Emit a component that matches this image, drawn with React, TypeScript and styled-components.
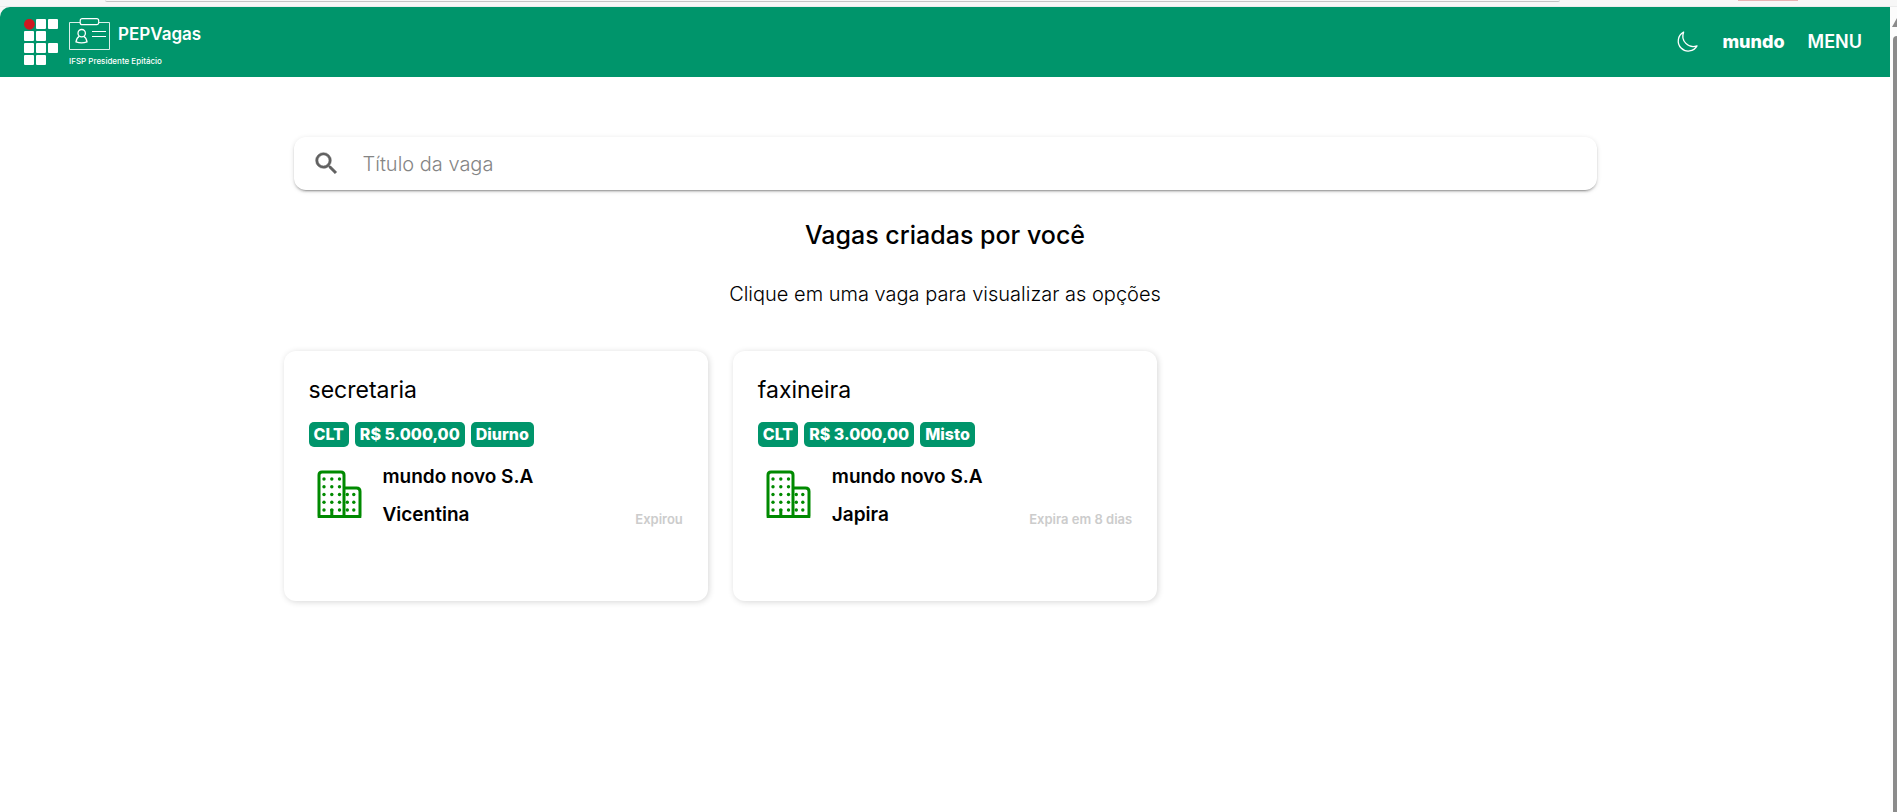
import React from "react";
import styled, { createGlobalStyle } from "styled-components";

const GlobalStyle = createGlobalStyle`
  *, *::before, *::after { box-sizing: border-box; }
  body { margin: 0; background: #ffffff; color: #000000; font-family: Inter, sans-serif; }
  h1, h2, p, ul { margin: 0; padding: 0; }
`;

const green = "#00956b";

const Shell = styled.div`
  min-height: 100vh;
  display: flex;
  flex-direction: column;
`;

const ChromeStrip = styled.div`
  height: 7px;
  padding: 0 99px 0 105px;
  background: #f7f7f7;
  border-bottom: 1px solid #ececec;
  display: flex;
  align-items: flex-start;
`;

const AddressBar = styled.div`
  flex: 1;
  height: 2px;
  border-bottom: 1px solid #c4c4c4;
  border-radius: 0 0 12px 12px;
`;

const Alert = styled.div`
  width: 60px;
  height: 1px;
  margin-left: 178px;
  background: #e8b4b4;
`;

const Viewport = styled.div`
  flex: 1;
  display: flex;
  background: linear-gradient(#f7f7f7 0 12px, #ffffff 12px);
`;

const Page = styled.div`
  flex: 1;
  min-width: 0;
`;

const ScrollTrack = styled.div`
  width: 7px;
  background: #fcfcfc;
  padding-top: 11px;
  overflow: hidden;
  display: flex;
  flex-direction: column;
`;

const ScrollArrow = styled.svg`
  width: 10px;
  height: 9px;
  margin-left: 2px;
  flex: none;
`;

const ScrollThumb = styled.div`
  flex: 1;
  margin: 9px 0 0 3px;
  background: #8b8b8b;
  border-radius: 4px 0 0 0;
`;

const Header = styled.header`
  height: 70px;
  padding: 0 28px 0 24px;
  background: ${green};
  color: #ffffff;
  border-top-left-radius: 10px;
  display: flex;
  align-items: center;
  justify-content: space-between;
`;

const Brand = styled.a`
  display: flex;
  align-items: center;
  gap: 11px;
  color: inherit;
  text-decoration: none;
`;

const BrandText = styled.span`
  display: flex;
  flex-direction: column;
  gap: 6px;
`;

const BrandTitle = styled.span`
  display: flex;
  align-items: center;
  gap: 8px;
  font-size: 17px;
  line-height: 32px;
  font-weight: 600;
`;

const BrandCaption = styled.span`
  font-size: 8px;
  line-height: 10px;
  font-weight: 500;
`;

const Actions = styled.nav`
  display: flex;
  align-items: center;
  gap: 23px;
`;

const PlainButton = styled.button`
  border: 0;
  padding: 0;
  background: none;
  color: inherit;
  font: inherit;
  display: flex;
  cursor: pointer;
`;

const UserButton = styled(PlainButton)`
  font-size: 18px;
  line-height: 24px;
  font-weight: 800;
`;

const MenuButton = styled(PlainButton)`
  font-size: 18px;
  line-height: 24px;
  font-weight: 600;
`;

const Main = styled.main`
  width: 70%;
  margin: 0 auto;
  padding: 60px 0 40px;
`;

const SearchBox = styled.label`
  height: 53px;
  margin: 0 10px;
  padding: 0 18px;
  border-radius: 12px;
  box-shadow: 0 3px 1px -2px rgba(0, 0, 0, 0.2), 0 2px 2px 0 rgba(0, 0, 0, 0.14), 0 1px 5px 0 rgba(0, 0, 0, 0.12);
  display: flex;
  align-items: center;
  gap: 22px;
`;

const SearchInput = styled.input`
  flex: 1;
  min-width: 0;
  padding: 0;
  border: 0;
  outline: 0;
  background: none;
  font-family: inherit;
  font-size: 20px;
  line-height: 28px;
  font-weight: 300;
  &::placeholder { color: #858585; opacity: 1; }
`;

const Title = styled.h1`
  margin-top: 29px;
  font-size: 25px;
  line-height: 32px;
  font-weight: 500;
  text-align: center;
`;

const Subtitle = styled.p`
  margin-top: 29px;
  font-size: 20px;
  line-height: 28px;
  font-weight: 300;
  text-align: center;
`;

const JobGrid = styled.ul`
  margin-top: 43px;
  display: grid;
  grid-template-columns: repeat(3, 1fr);
  gap: 25px;
  list-style: none;
`;

const JobCard = styled.li`
  min-height: 250px;
  padding: 25px;
  border-radius: 12px;
  box-shadow: 1px 1px 6px rgba(0, 0, 0, 0.16);
`;

const JobTitle = styled.h2`
  font-size: 23px;
  line-height: 28px;
  font-weight: 400;
`;

const Tags = styled.div`
  margin-top: 18px;
  display: flex;
  gap: 6px;
`;

const Tag = styled.span`
  padding: 0 5px;
  border-radius: 5px;
  background: ${green};
  color: #ffffff;
  font-size: 16px;
  line-height: 25px;
  font-weight: 800;
`;

const Company = styled.div`
  margin-top: 18px;
  display: flex;
`;

const CompanyIcon = styled.svg`
  width: 45px;
  height: 48px;
  margin: 5px 21px 0 8px;
  flex: none;
`;

const CompanyText = styled.div`
  flex: 1;
  font-size: 19px;
  line-height: 24px;
  font-weight: 600;
  display: flex;
  flex-direction: column;
  gap: 14px;
`;

const Expiry = styled.span`
  align-self: flex-end;
  color: #cccccc;
  font-size: 13px;
  line-height: 16px;
  font-weight: 600;
`;

const tiles = [[1, 0], [2, 0], [0, 1], [1, 1], [0, 2], [1, 2], [2, 2], [0, 3], [1, 3]];

const CampusLogo = () => (
  <svg width="34" height="46" viewBox="0 0 34 46" aria-hidden="true">
    <circle cx="5.4" cy="5.3" r="5.4" fill="#cf1820" />
    {tiles.map(([c, r]) => (
      <rect key={`${c}-${r}`} x={c * 12} y={r * 12} width="10" height="10" rx="1" fill="#fff" />
    ))}
  </svg>
);

const BadgeIcon = () => (
  <svg width="41" height="32" viewBox="0 0 41 32" fill="none" stroke="#fff" aria-hidden="true">
    <path d="M11 4.5H.5v27h40v-27H30" opacity=".85" />
    <rect x="11.2" y=".7" width="18.5" height="6" rx="2" strokeWidth="1.2" />
    <circle cx="12.7" cy="15.2" r="3.7" strokeWidth="1.3" />
    <path d="M10.2 18.3c-2 1-2.8 3-3.2 5.5 3 1.1 8.200 1.100 11 0-.4-2.500-1.300-4.500-3.200-5.500" strokeWidth="1.3" />
    <path d="M23 13.500h14M23 18.500h14" strokeWidth="1.1" />
  </svg>
);

const MoonIcon = () => (
  <svg width="24" height="24" viewBox="0 0 24 24" fill="none" stroke="#fff" strokeWidth="1.3" strokeLinejoin="round" aria-hidden="true">
    <path d="M8.600 2.200A10 10 0 1 0 22 15.900 10.500 10.500 0 0 1 8.600 2.200Z" />
  </svg>
);

const SearchIcon = () => (
  <svg width="29" height="29" viewBox="0 0 24 24" fill="#616161" stroke="#616161" strokeWidth=".4" aria-hidden="true">
    <path d="M15.500 14h-.79l-.28-.27A6.470 6.470 0 0 0 16 9.500 6.500 6.500 0 1 0 9.500 16c1.610 0 3.090-.59 4.230-1.570l.27.28v.79l5 4.990L20.490 19l-4.990-5zm-6 0C7.010 14 5 11.990 5 9.500S7.010 5 9.500 5 14 7.010 14 9.500 11.990 14 9.500 14z" />
  </svg>
);

const towerDots = [7, 14.800, 22.500].flatMap((x) => [9, 16.700, 24.500, 32.300, 40].map((y) => [x, y]));
const annexDots = [30.300, 36.800].flatMap((x) => [24.500, 32.300, 40].map((y) => [x, y]));

const BuildingIcon = () => (
  <CompanyIcon viewBox="0 0 45 48" aria-hidden="true">
    <path
      d="M2 46.500V5Q2 2 5 2H24Q27 2 27 5V46.500M27 18H39.500Q43 18 43 21.500V46.500M.7 46.500H44.300M14.800 46V39"
      fill="none"
      stroke="#008a00"
      strokeWidth="3"
    />
    {[...towerDots, ...annexDots].map(([x, y]) => (
      <circle key={`${x}-${y}`} cx={x} cy={y} r="1.700" fill="#008a00" />
    ))}
  </CompanyIcon>
);

const jobs = [
  { title: "secretaria", tags: ["CLT", "R$ 5.000,00", "Diurno"], company: "mundo novo S.A", city: "Vicentina", expiry: "Expirou" },
  { title: "faxineira", tags: ["CLT", "R$ 3.000,00", "Misto"], company: "mundo novo S.A", city: "Japira", expiry: "Expira em 8 dias" },
];

export default function App() {
  return (
    <>
      <GlobalStyle />
      <Shell>
        <ChromeStrip>
          <AddressBar />
          <Alert />
        </ChromeStrip>
        <Viewport>
          <Page>
            <Header>
              <Brand href="#">
                <CampusLogo />
                <BrandText>
                  <BrandTitle><BadgeIcon />PEPVagas</BrandTitle>
                  <BrandCaption>IFSP Presidente Epitácio</BrandCaption>
                </BrandText>
              </Brand>
              <Actions>
                <PlainButton type="button" aria-label="Alternar tema"><MoonIcon /></PlainButton>
                <UserButton type="button">mundo</UserButton>
                <MenuButton type="button">MENU</MenuButton>
              </Actions>
            </Header>
            <Main>
              <SearchBox>
                <SearchIcon />
                <SearchInput type="text" placeholder="Título da vaga" aria-label="Título da vaga" />
              </SearchBox>
              <Title>Vagas criadas por você</Title>
              <Subtitle>Clique em uma vaga para visualizar as opções</Subtitle>
              <JobGrid>
                {jobs.map((job) => (
                  <JobCard key={job.title}>
                    <JobTitle>{job.title}</JobTitle>
                    <Tags>{job.tags.map((tag) => <Tag key={tag}>{tag}</Tag>)}</Tags>
                    <Company>
                      <BuildingIcon />
                      <CompanyText>
                        <p>{job.company}</p>
                        <p>{job.city}</p>
                      </CompanyText>
                      <Expiry>{job.expiry}</Expiry>
                    </Company>
                  </JobCard>
                ))}
              </JobGrid>
            </Main>
          </Page>
          <ScrollTrack aria-hidden="true">
            <ScrollArrow viewBox="0 0 10 9"><path d="M5 0 10 9H0Z" fill="#8b8b8b" /></ScrollArrow>
            <ScrollThumb />
          </ScrollTrack>
        </Viewport>
      </Shell>
    </>
  );
}
